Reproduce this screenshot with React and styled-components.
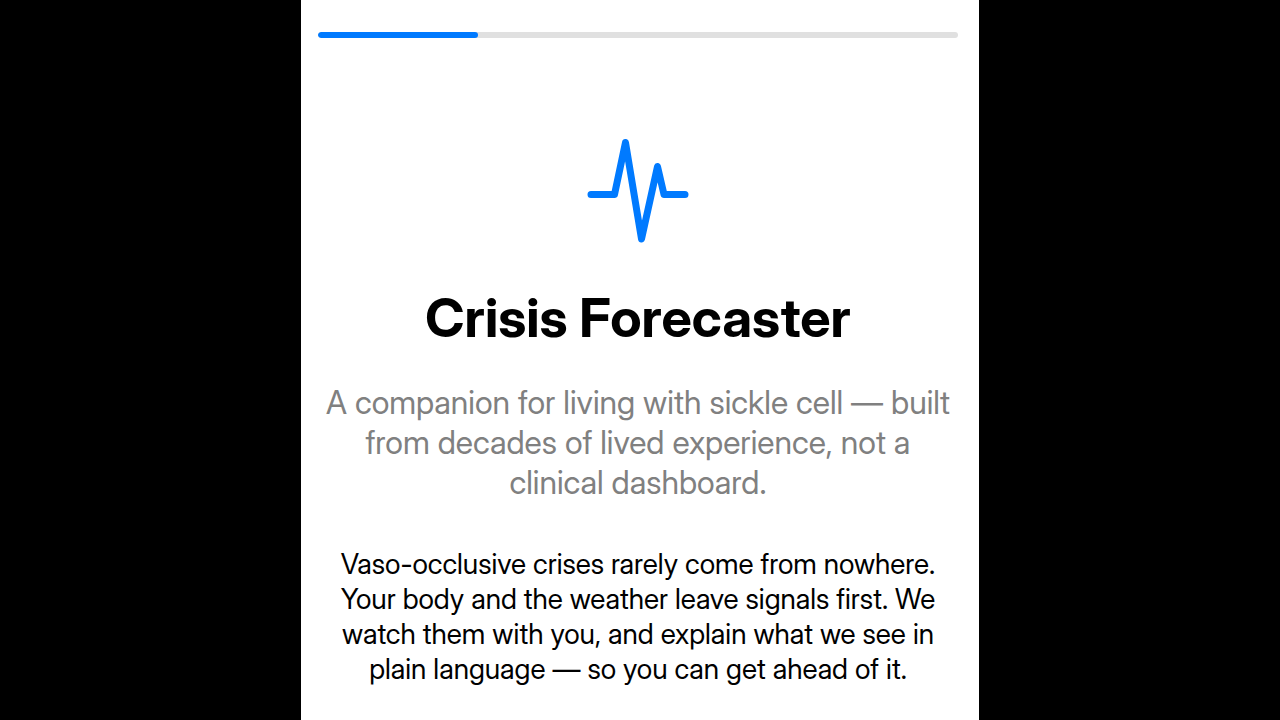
import React from "react";
import styled, { createGlobalStyle } from "styled-components";

const GlobalStyle = createGlobalStyle`
  * {
    box-sizing: border-box;
  }
  body {
    margin: 0;
    background: #000000;
    font-family: "Inter Display", Inter, "Liberation Sans", sans-serif;
  }
`;

const Screen = styled.main`
  width: 53%;
  min-width: 678px;
  min-height: 100vh;
  margin: 0 auto;
  padding: 32px 21px 32px 17px;
  display: flex;
  flex-direction: column;
  align-items: center;
  background: #ffffff;
  text-align: center;
`;

const Track = styled.div`
  width: 100%;
  height: 6px;
  border-radius: 3px;
  overflow: hidden;
  background: #e0e0e0;
`;

const Fill = styled.div`
  height: 100%;
  border-radius: 3px;
  background: #007aff;
`;

const Pulse = styled.svg`
  width: 104px;
  height: 106px;
  margin-top: 100px;
  fill: none;
  stroke: #007aff;
  stroke-width: 7;
  stroke-linecap: round;
  stroke-linejoin: round;
`;

const Title = styled.h1`
  margin: 42px 0 0;
  font-size: 54px;
  font-weight: 700;
  line-height: 64px;
  color: #000000;
`;

const Text = styled.p`
  margin: 0;
  color: #000000;
  font-size: 28px;
  line-height: 35px;
`;

const Lead = styled(Text)`
  margin: 33px 0 44px;
  color: #808080;
  font-size: 32px;
  line-height: 40px;
`;

const ProgressBar = ({ step, total }) => (
  <Track
    role="progressbar"
    aria-label="Setup progress"
    aria-valuenow={step}
    aria-valuemin={0}
    aria-valuemax={total}
  >
    <Fill style={{ width: `${(step / total) * 100}%` }} />
  </Track>
);

const App = () => {
  return (
    <>
      <GlobalStyle />
      <Screen>
        <ProgressBar step={1} total={4} />
        <Pulse viewBox="0 0 104 106" aria-hidden="true">
          <path d="M5 56.500H28.500L39.500 4.500L55.500 101L71.500 28.500L78 56.500H99" />
        </Pulse>
        <Title>Crisis Forecaster</Title>
        <Lead>
          A companion for living with sickle cell — built
          <br />
          from decades of lived experience, not a
          <br />
          clinical dashboard.
        </Lead>
        <Text>
          Vaso-occlusive crises rarely come from nowhere.
          <br />
          Your body and the weather leave signals first. We
          <br />
          watch them with you, and explain what we see in
          <br />
          plain language — so you can get ahead of it.
        </Text>
      </Screen>
    </>
  );
};

export default App;
